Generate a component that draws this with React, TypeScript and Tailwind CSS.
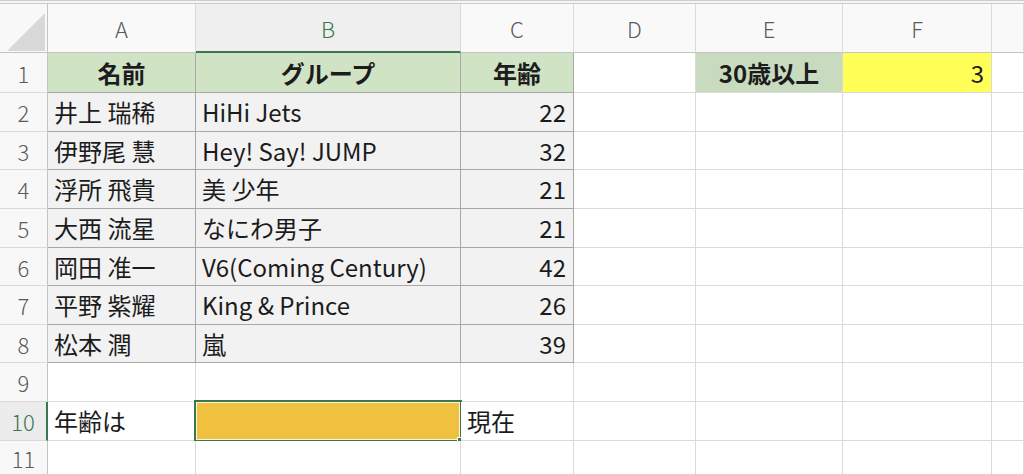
import type { ReactNode } from "react";

type Align = "left" | "center" | "right";

type CellData = {
  text?: string;
  align?: Align;
  bold?: boolean;
  bg?: string;
  table?: boolean;
  selected?: boolean;
};

const colWidths = [
  "w-[148px]",
  "w-[265px]",
  "w-[113px]",
  "w-[122px]",
  "w-[147px]",
  "w-[149px]",
  "w-[32px]",
];

const colLetters = ["A", "B", "C", "D", "E", "F", ""];

const rowHeights = [
  "h-[40px]",
  "h-[39px]",
  "h-[38px]",
  "h-[39px]",
  "h-[39px]",
  "h-[38px]",
  "h-[39px]",
  "h-[38px]",
  "h-[39px]",
  "h-[39px]",
  "h-[34px]",
];

const people: [string, string, string][] = [
  ["井上 瑞稀", "HiHi Jets", "22"],
  ["伊野尾 慧", "Hey! Say! JUMP", "32"],
  ["浮所 飛貴", "美 少年", "21"],
  ["大西 流星", "なにわ男子", "21"],
  ["岡田 准一", "V6(Coming Century)", "42"],
  ["平野 紫耀", "King & Prince", "26"],
  ["松本 潤", "嵐", "39"],
];

function buildRows(): CellData[][] {
  const rows: CellData[][] = [];
  rows.push([
    { text: "名前", align: "center", bold: true, bg: "bg-[#d1e3c5]", table: true },
    { text: "グループ", align: "center", bold: true, bg: "bg-[#d1e3c5]", table: true },
    { text: "年齢", align: "center", bold: true, bg: "bg-[#d1e3c5]", table: true },
    {},
    { text: "30歳以上", align: "center", bold: true, bg: "bg-[#c9dbbe]" },
    { text: "3", align: "right", bg: "bg-[#ffff57]" },
    {},
  ]);
  people.forEach(([name, group, age]) => {
    rows.push([
      { text: name, bg: "bg-[#f2f2f2]", table: true },
      { text: group, bg: "bg-[#f2f2f2]", table: true },
      { text: age, align: "right", bg: "bg-[#f2f2f2]", table: true },
      {},
      {},
      {},
      {},
    ]);
  });
  rows.push([{}, {}, {}, {}, {}, {}, {}]);
  rows.push([
    { text: "年齢は" },
    { bg: "bg-[#f0c03f]", selected: true },
    { text: "現在" },
    {},
    {},
    {},
    {},
  ]);
  rows.push([{}, {}, {}, {}, {}, {}, {}]);
  return rows;
}

function Cell({ cell, width, height }: { cell: CellData; width: string; height: string }) {
  const align =
    cell.align === "center"
      ? "justify-center"
      : cell.align === "right"
        ? "justify-end pr-[7px]"
        : "justify-start pl-[6px]";
  const border = cell.table ? "border-[#a8a8a8]" : "border-[#dadada]";
  return (
    <div
      className={`relative shrink-0 flex items-center border-r border-b ${border} ${width} ${height} ${align} ${cell.bg ?? "bg-white"} ${cell.bold ? "font-bold" : "font-normal"}`}
    >
      {cell.text && <span className="whitespace-nowrap">{cell.text}</span>}
      {cell.selected && (
        <div className="absolute -top-[2px] -left-[2px] -right-[2px] -bottom-[2px] border-2 border-[#3b7650]">
          <div className="h-full w-full border border-[#fbf3d8]"></div>
          <div className="absolute -right-[4px] -bottom-[4px] w-[7px] h-[7px] bg-[#3b7650] border border-white"></div>
        </div>
      )}
    </div>
  );
}

function RowHeader({ label, height, active }: { label: string; height: string; active?: boolean }): ReactNode {
  return (
    <div
      className={`shrink-0 w-[48px] ${height} flex items-center justify-center border-b border-[#dadada] text-[22px] ${
        active
          ? "bg-[#ececec] text-[#3b7650] border-r-2 border-r-[#3b7650]"
          : "bg-[#f8f8f8] text-[#5a5a5a] border-r border-r-[#c4c4c4]"
      } font-light`}
    >
      {label}
    </div>
  );
}

export default function App() {
  const rows = buildRows();
  return (
    <div className="w-[1024px] h-[474px] overflow-hidden bg-white text-[#1c1c1c] text-[24px] leading-none font-['Noto_Sans_CJK_JP','Noto_Sans',sans-serif]">
      <div className="h-[4px] border-t border-b border-[#cdcdcd] bg-[#f4f4f4]"></div>
      <div className="flex h-[49px]">
        <div className="shrink-0 w-[48px] h-full relative bg-[#f8f8f8] border-r border-b border-[#c4c4c4]">
          <svg className="absolute left-0 top-0" width="48" height="48" viewBox="0 0 48 48">
            <polygon points="7,47 45,47 45,9" fill="#d9d9d9" />
          </svg>
        </div>
        {colLetters.map((letter, i) => (
          <div
            key={i}
            className={`shrink-0 ${colWidths[i]} h-full flex items-center justify-center text-[22px] font-light border-r border-r-[#dadada] ${
              letter === "B"
                ? "bg-[#efefef] text-[#3b7650] border-b-2 border-b-[#3b7650]"
                : "bg-[#f9f9f9] text-[#5a5a5a] border-b border-b-[#c4c4c4]"
            }`}
          >
            {letter}
          </div>
        ))}
      </div>
      {rows.map((row, r) => (
        <div key={r} className="flex">
          <RowHeader label={String(r + 1)} height={rowHeights[r]} active={r === 9} />
          {row.map((cell, c) => (
            <Cell key={c} cell={cell} width={colWidths[c]} height={rowHeights[r]} />
          ))}
        </div>
      ))}
    </div>
  );
}
